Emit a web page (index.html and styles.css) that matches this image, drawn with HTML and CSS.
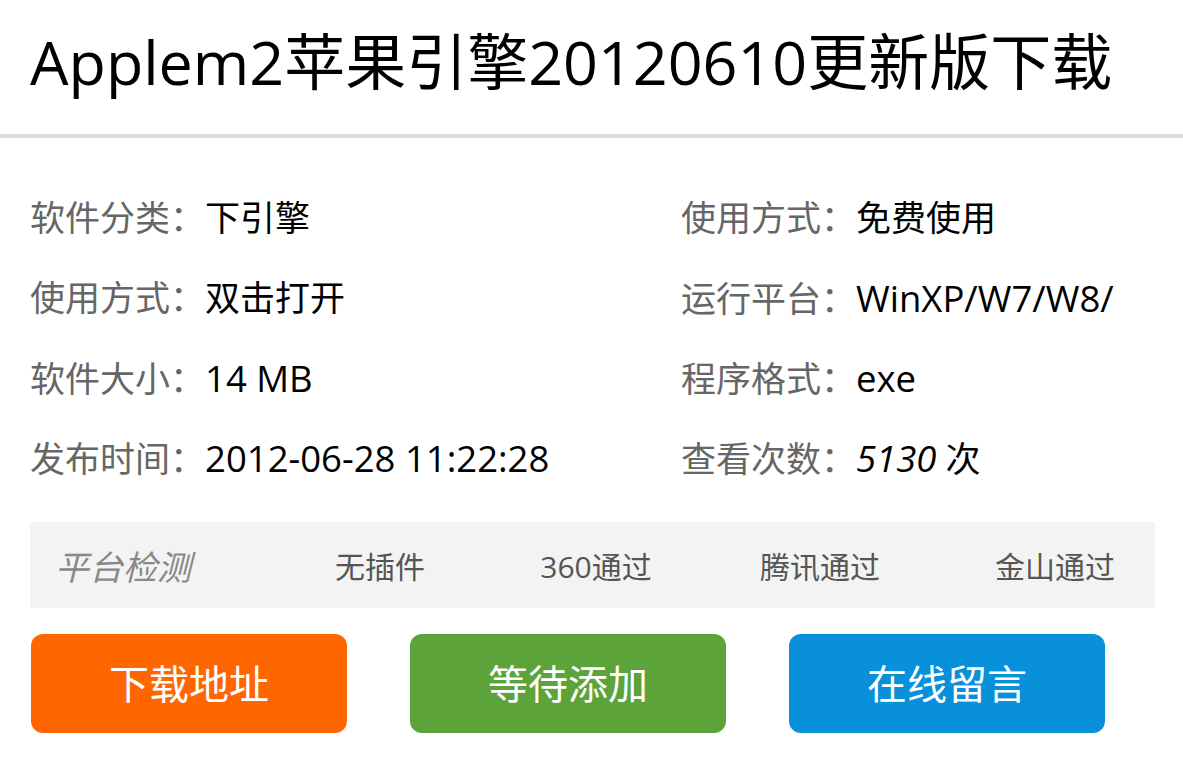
FILE: index.html
```html
<!DOCTYPE html>
<html lang="zh-CN">
<head>
<meta charset="utf-8">
<title>Applem2苹果引擎20120610更新版下载</title>
<link rel="stylesheet" href="styles.css">
</head>
<body>
<div class="page">
  <h1 class="title">Applem2苹果引擎20120610更新版下载</h1>
  <div class="info">
    <div class="row"><span class="label">软件分类：</span><span class="value">下引擎</span></div>
    <div class="row"><span class="label">使用方式：</span><span class="value">免费使用</span></div>
    <div class="row"><span class="label">使用方式：</span><span class="value">双击打开</span></div>
    <div class="row"><span class="label">运行平台：</span><span class="value latin">WinXP/W7/W8/</span></div>
    <div class="row"><span class="label">软件大小：</span><span class="value latin">14 MB</span></div>
    <div class="row"><span class="label">程序格式：</span><span class="value latin">exe</span></div>
    <div class="row"><span class="label">发布时间：</span><span class="value latin">2012-06-28 11:22:28</span></div>
    <div class="row"><span class="label">查看次数：</span><span class="value"><em class="latin">5130</em> 次</span></div>
  </div>
  <div class="check">
    <span class="check-label">平台检测</span>
    <span class="check-item">无插件</span>
    <span class="check-item">360通过</span>
    <span class="check-item">腾讯通过</span>
    <span class="check-item last">金山通过</span>
  </div>
  <div class="buttons">
    <a class="btn btn-orange">下载地址</a>
    <a class="btn btn-green">等待添加</a>
    <a class="btn btn-blue">在线留言</a>
  </div>
</div>
</body>
</html>
```
FILE: styles.css
```css
html, body {
  margin: 0;
  padding: 0;
  background: #fff;
}
body {
  font-family: "Open Sans", "Noto Sans CJK SC", sans-serif;
  color: #000;
}
.page {
  width: 1183px;
}
.title {
  margin: 0;
  padding: 20px 0 30px 30px;
  font-size: 61px;
  font-weight: normal;
  line-height: 84px;
  border-bottom: 4px solid #dddddd;
  white-space: nowrap;
}
.info {
  margin: 40px 28px 0 30px;
  display: grid;
  grid-template-columns: 651px 1fr;
}
.row {
  height: 80px;
  line-height: 80px;
  font-size: 35px;
  white-space: nowrap;
}
.label {
  color: #666;
}
.value {
  color: #000;
}
.latin {
  font-size: 36.5px;
}
.value em {
  font-style: italic;
}
.check {
  margin: 24px 28px 0 30px;
  height: 86px;
  background: #f3f3f3;
  display: grid;
  grid-template-columns: 243px 214px 218px 230px 1fr;
  align-items: center;
}
.check-label {
  padding-left: 25px;
  font-size: 34px;
  font-style: italic;
  color: #888;
}
.check-item {
  text-align: center;
  font-size: 30px;
  color: #555;
}
.check-item.last {
  padding-left: 20px;
}
.buttons {
  margin: 26px 0 0 31px;
  display: flex;
  gap: 63px;
}
.btn {
  width: 316px;
  height: 99px;
  line-height: 99px;
  border-radius: 12px;
  text-align: center;
  color: #fff;
  font-size: 40px;
  text-decoration: none;
}
.btn-orange {
  background: #ff6600;
}
.btn-green {
  background: #5ca33a;
}
.btn-blue {
  background: #0990db;
}
```
